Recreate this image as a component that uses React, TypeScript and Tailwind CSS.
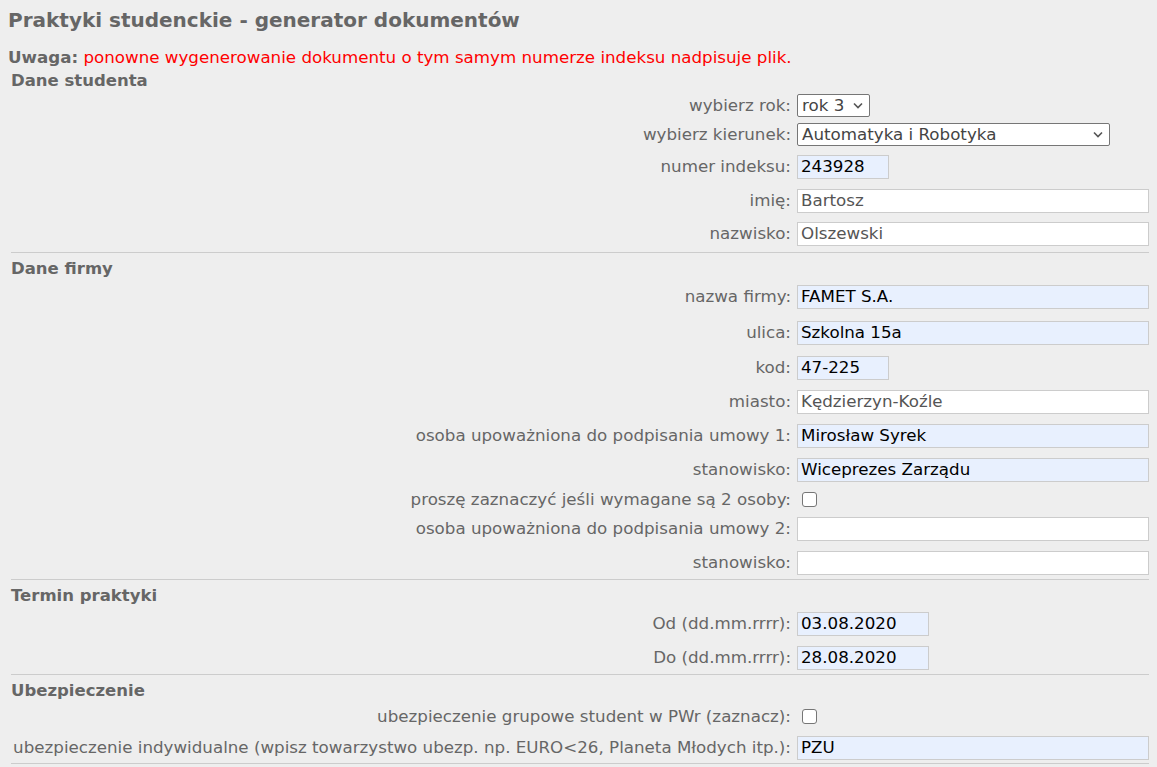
import clsx from "clsx";
import type { ReactNode } from "react";

const font = "font-['DejaVu_Sans',Verdana,sans-serif]";

const Row = ({ label, h, children }: { label: string; h: string; children: ReactNode }) => (
  <div className={clsx("grid grid-cols-[786px_1fr] items-center", h)}>
    <div className="whitespace-nowrap pr-[6px] text-right text-[#666666]">{label}</div>
    <div className="flex items-center">{children}</div>
  </div>
);

const TextBox = ({ value = "", w = "w-full", filled = false }: { value?: string; w?: string; filled?: boolean }) => (
  <div
    className={clsx(
      "flex h-[24px] items-center whitespace-nowrap border border-[#cccccc] pl-[3px]",
      w,
      filled ? "bg-[#e8f0fe] text-black" : "bg-white text-[#555555]"
    )}
  >
    {value}
  </div>
);

const Select = ({ value, w }: { value: string; w: string }) => (
  <div
    className={clsx(
      "flex h-[23px] items-center justify-between rounded-[2px] border border-[#767676] bg-white pl-[4px] pr-[6px] text-[#444444]",
      w
    )}
  >
    <span>{value}</span>
    <svg width="10" height="7" viewBox="0 0 10 7" fill="none">
      <path d="M1 1.5 5 5.5 9 1.5" stroke="#555" strokeWidth="1.6" />
    </svg>
  </div>
);

const Checkbox = () => (
  <div className="ml-[5px] h-[15px] w-[15px] rounded-[3px] border border-[#767676] bg-white" />
);

const Header = ({ children }: { children: ReactNode }) => (
  <div className="pt-[6px] text-[16.5px] font-bold leading-[20px] text-[#666666]">{children}</div>
);

const Rule = () => <div className="border-t border-[#cccccc]" />;

export default function App() {
  return (
    <div className={clsx("min-h-screen bg-[#eeeeee] pl-[8px] pr-[8px] text-[16.7px]", font)}>
      <h1 className="pt-[8px] text-[20px] font-bold leading-[24px] text-[#666666]">
        Praktyki studenckie - generator dokumentów
      </h1>
      <p className="mt-[15px] leading-[20px] text-[#ff0000]">
        <span className="font-bold text-[#666666]">Uwaga:</span> ponowne wygenerowanie dokumentu o tym samym
        numerze indeksu nadpisuje plik.
      </p>

      <div className="ml-[3px]">
        <div className="-mt-[2px]">
          <Header>Dane studenta</Header>
        </div>
        <Row label="wybierz rok:" h="h-[29px]">
          <Select value="rok 3" w="w-[73px]" />
        </Row>
        <Row label="wybierz kierunek:" h="h-[29px]">
          <Select value="Automatyka i Robotyka" w="w-[313px]" />
        </Row>
        <Row label="numer indeksu:" h="h-[35px]">
          <TextBox value="243928" w="w-[92px]" filled />
        </Row>
        <Row label="imię:" h="h-[33px]">
          <TextBox value="Bartosz" />
        </Row>
        <Row label="nazwisko:" h="h-[33px]">
          <TextBox value="Olszewski" />
        </Row>
        <div className="mt-[2px]">
          <Rule />
        </div>

        <Header>Dane firmy</Header>
        <Row label="nazwa firmy:" h="h-[36px]">
          <TextBox value="FAMET S.A." filled />
        </Row>
        <Row label="ulica:" h="h-[35px]">
          <TextBox value="Szkolna 15a" filled />
        </Row>
        <Row label="kod:" h="h-[35px]">
          <TextBox value="47-225" w="w-[92px]" filled />
        </Row>
        <Row label="miasto:" h="h-[34px]">
          <TextBox value="Kędzierzyn-Koźle" />
        </Row>
        <Row label="osoba upoważniona do podpisania umowy 1:" h="h-[34px]">
          <TextBox value="Mirosław Syrek" filled />
        </Row>
        <Row label="stanowisko:" h="h-[34px]">
          <TextBox value="Wiceprezes Zarządu" filled />
        </Row>
        <Row label="proszę zaznaczyć jeśli wymagane są 2 osoby:" h="h-[24px]">
          <Checkbox />
        </Row>
        <Row label="osoba upoważniona do podpisania umowy 2:" h="h-[36px]">
          <TextBox />
        </Row>
        <Row label="stanowisko:" h="h-[32px]">
          <TextBox />
        </Row>
        <Rule />

        <Header>Termin praktyki</Header>
        <Row label="Od (dd.mm.rrrr):" h="h-[36px]">
          <TextBox value="03.08.2020" w="w-[132px]" filled />
        </Row>
        <Row label="Do (dd.mm.rrrr):" h="h-[32px]">
          <TextBox value="28.08.2020" w="w-[132px]" filled />
        </Row>
        <Rule />

        <Header>Ubezpieczenie</Header>
        <Row label="ubezpieczenie grupowe student w PWr (zaznacz):" h="h-[31px]">
          <Checkbox />
        </Row>
        <Row label="ubezpieczenie indywidualne (wpisz towarzystwo ubezp. np. EURO<26, Planeta Młodych itp.):" h="h-[31px]">
          <TextBox value="PZU" filled />
        </Row>
        <Rule />
      </div>
    </div>
  );
}
